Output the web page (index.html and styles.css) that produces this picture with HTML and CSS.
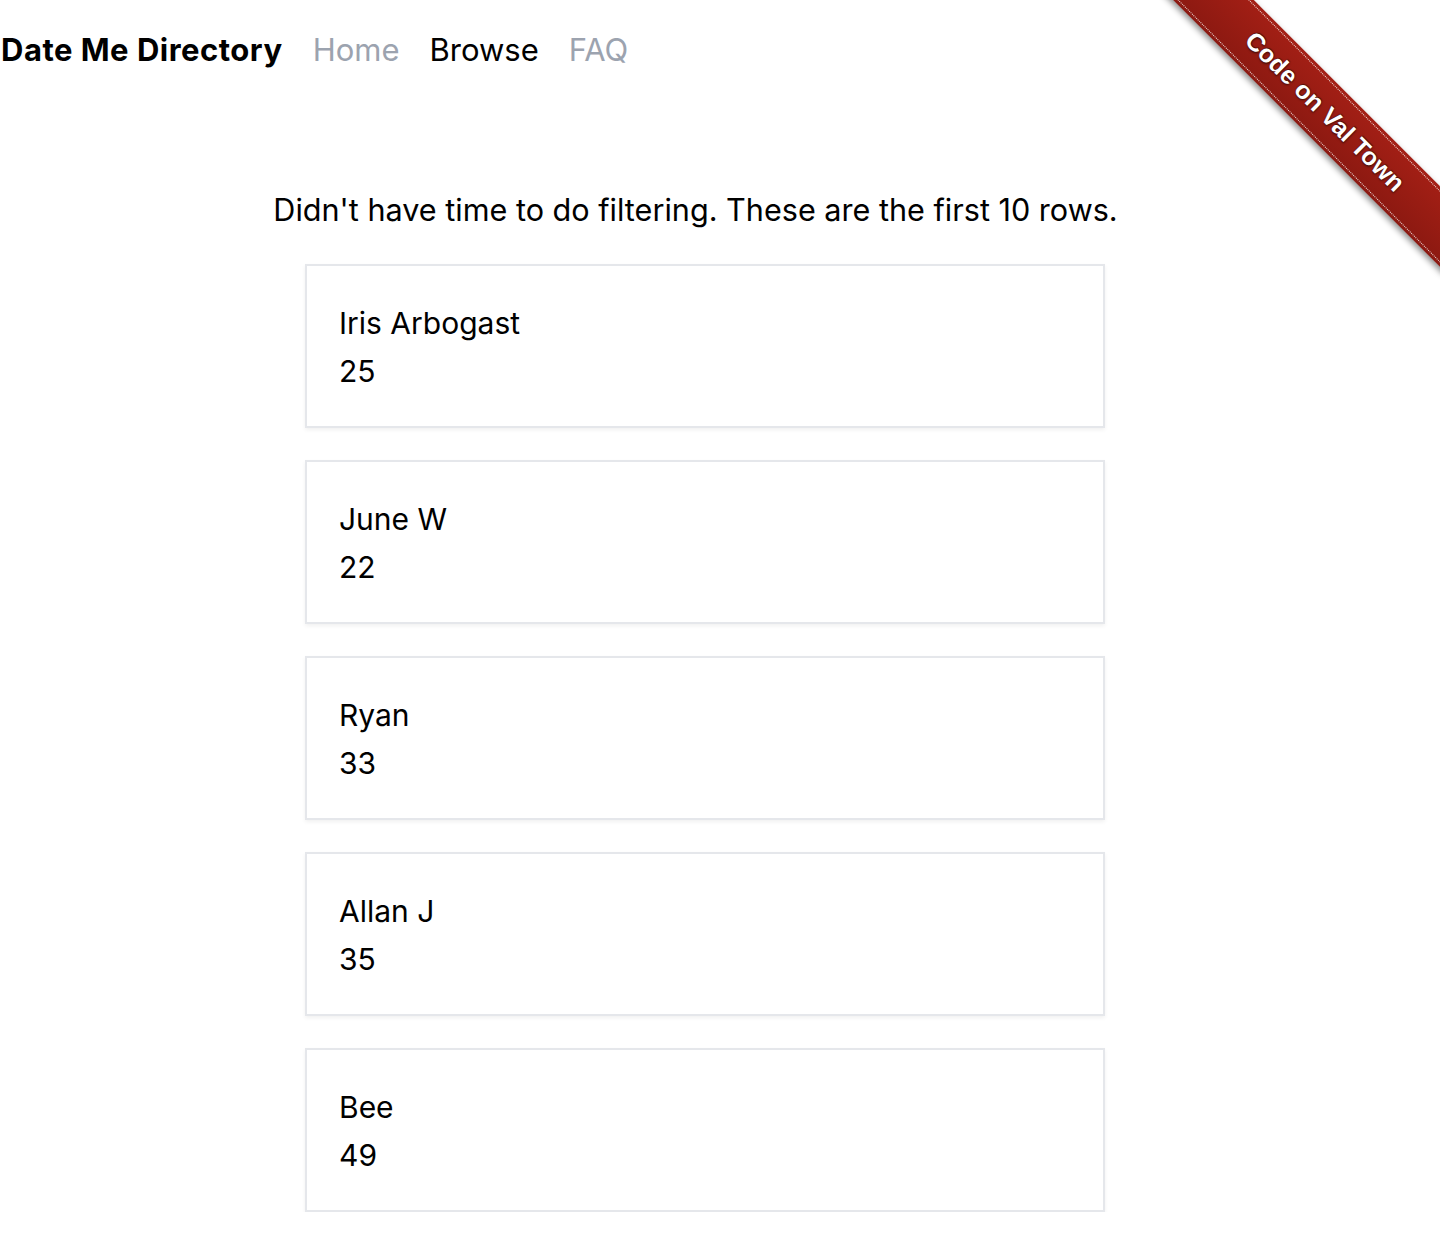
FILE: index.html
```html
<!DOCTYPE html>
<html lang="en">
<head>
<meta charset="utf-8">
<title>Date Me Directory</title>
<link rel="stylesheet" href="styles.css">
</head>
<body>
<header class="nav">
  <a class="brand" href="#">Date Me Directory</a>
  <a class="link muted" href="#">Home</a>
  <a class="link" href="#">Browse</a>
  <a class="link muted" href="#">FAQ</a>
</header>
<main class="main">
  <p class="intro">Didn't have time to do filtering. These are the first 10 rows.</p>
  <div class="list">
    <div class="card"><div>Iris Arbogast</div><div>25</div></div>
    <div class="card"><div>June W</div><div>22</div></div>
    <div class="card"><div>Ryan</div><div>33</div></div>
    <div class="card"><div>Allan J</div><div>35</div></div>
    <div class="card"><div>Bee</div><div>49</div></div>
  </div>
</main>
<div class="ribbon-wrap">
  <a class="ribbon" href="#"><span class="ribbon-text">Code on Val Town</span></a>
</div>
</body>
</html>
```
FILE: styles.css
```css
html, body {
  margin: 0;
  padding: 0;
  background: #fff;
  color: #000;
  font-family: Inter, "Noto Sans", sans-serif;
  font-size: 30px;
  line-height: 48px;
}
body {
  position: relative;
  overflow-x: hidden;
}
a { text-decoration: none; color: inherit; }

.nav {
  display: flex;
  align-items: baseline;
  gap: 30px;
  padding: 26px 0 0 1px;
  font-size: 31px;
}
.brand {
  font-weight: 700;
  letter-spacing: 0.5px;
}
.link { color: #000; }
.link.muted { color: #9ca3af; }

.main {
  padding-top: 112px;
}
.intro {
  margin: 0;
  width: 1391px;
  text-align: center;
  font-size: 30.6px;
}
.list {
  width: 800px;
  margin: 30px 0 0 305px;
  display: flex;
  flex-direction: column;
  gap: 32px;
}
.card {
  border: 2px solid #e5e7eb;
  box-shadow: 0 2px 4px rgba(0, 0, 0, 0.06);
  padding: 33px 32px 31px;
}

.ribbon-wrap {
  position: absolute;
  top: 0;
  right: 0;
  width: 300px;
  height: 300px;
  overflow: hidden;
}
.ribbon {
  position: absolute;
  left: -15px;
  top: 83px;
  width: 400px;
  height: 57px;
  transform: rotate(45deg);
  background: linear-gradient(#a31f15, #8c1911);
  box-shadow: 0 3px 6px rgba(0, 0, 0, 0.45);
  display: flex;
  align-items: center;
  justify-content: center;
}
.ribbon::before, .ribbon::after {
  content: "";
  position: absolute;
  left: 0;
  right: 0;
  border-top: 1px dotted rgba(255, 255, 255, 0.85);
}
.ribbon::before { top: 3px; }
.ribbon::after { bottom: 3px; }
.ribbon-text {
  font-family: "Liberation Sans", Arial, sans-serif;
  font-weight: 700;
  font-size: 25px;
  line-height: 1;
  color: #fff;
  text-shadow: 0 -1px 1px rgba(0, 0, 0, 0.6), 1px 1px 2px rgba(0, 0, 0, 0.5);
}
```
